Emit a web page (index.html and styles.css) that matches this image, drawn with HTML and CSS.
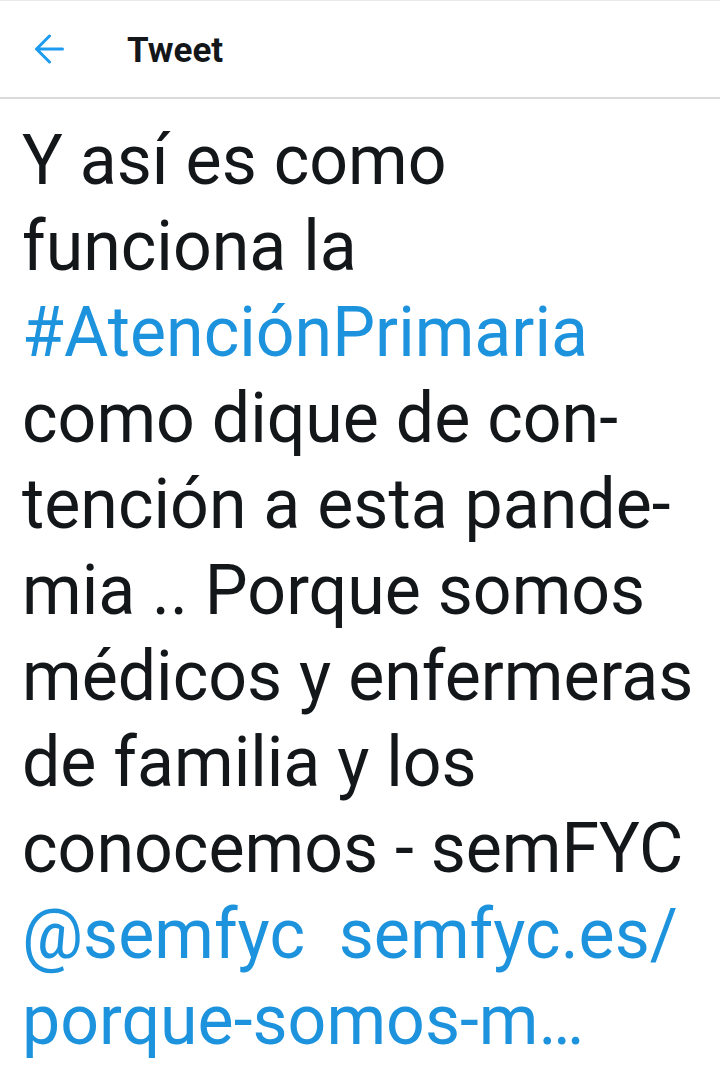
FILE: index.html
```html
<!DOCTYPE html>
<html>
<head>
<meta charset="utf-8">
<link rel="stylesheet" href="styles.css">
</head>
<body>
<div class="page">
  <header class="bar">
    <span class="back">
      <svg width="30" height="30" viewBox="0 0 30 30"><path d="M28.5 15H2.5M15.5 2L2.5 15l13 13" fill="none" stroke="#1d9bf0" stroke-width="3" stroke-linecap="round" stroke-linejoin="round"/></svg>
    </span>
    <span class="title">Tweet</span>
  </header>
  <main class="tweet">
    <p class="text">
      <span class="line">Y así es como</span>
      <span class="line">funciona la</span>
      <span class="line link">#AtenciónPrimaria</span>
      <span class="line">como dique de con-</span>
      <span class="line">tención a esta pande-</span>
      <span class="line">mia .. Porque somos</span>
      <span class="line">médicos y enfermeras</span>
      <span class="line">de familia y los</span>
      <span class="line">conocemos - semFYC</span>
      <span class="line link">@semfyc&nbsp; semfyc.es/</span>
      <span class="line link">porque-somos-m…</span>
    </p>
  </main>
</div>
</body>
</html>
```
FILE: styles.css
```css
html, body { margin: 0; padding: 0; background: #fff; }
.page { width: 720px; height: 1068px; overflow: hidden; font-family: Roboto, "Noto Sans", sans-serif; color: #14171a; border-top: 1px solid #e8e8e8; box-sizing: border-box; }
.bar { height: 98px; display: flex; align-items: center; border-bottom: 2px solid #dadada; box-sizing: border-box; }
.back { width: 30px; height: 30px; margin-left: 34px; display: flex; }
.title { margin-left: 63px; font-size: 35px; font-weight: 700; padding-top: 2px; }
.tweet { padding: 0 22px; }
.text { margin: 0; padding-top: 18px; font-size: 70px; line-height: 86px; transform: scaleX(0.972); transform-origin: 0 0; }
.line { display: block; white-space: nowrap; }
.link { color: #1d93de; }
```
